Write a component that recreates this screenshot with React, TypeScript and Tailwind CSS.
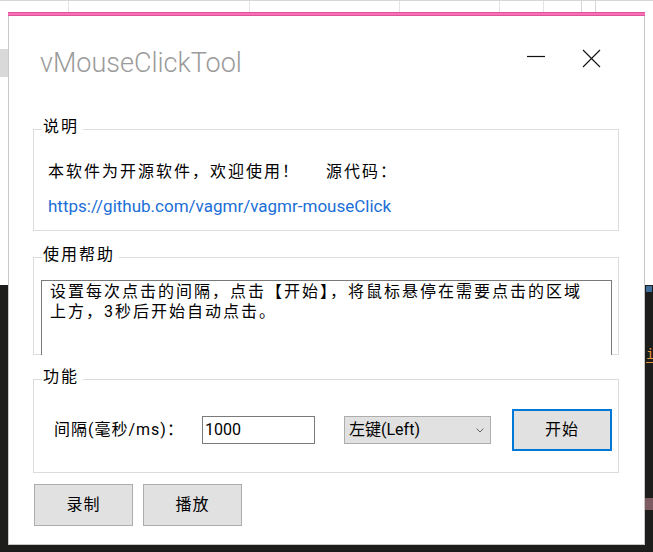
import React from "react";

function GroupBox({
  label,
  className,
  children,
}: {
  label: string;
  className: string;
  children?: React.ReactNode;
}) {
  return (
    <div className={"relative w-[586px] border border-[#dcdcdc] " + className}>
      <span className="absolute left-[8px] top-[-13px] bg-white pl-[1px] pr-[4px] text-[16px] leading-[20px] tracking-[2px] text-black">
        {label}
      </span>
      {children}
    </div>
  );
}

export default function App() {
  return (
    <div className="relative h-[552px] w-[653px] overflow-hidden bg-white font-['Roboto','Noto_Sans_CJK_SC',sans-serif]">
      {/* desktop behind the window */}
      <div className="absolute inset-x-0 top-0 flex h-[12px] border-t border-[#d6d6d6]">
        <div className="w-[69px] border-r border-[#e4e4e4]" />
        <div className="w-[181px] border-r border-[#e4e4e4]" />
        <div className="w-[150px] border-r border-[#e4e4e4]" />
        <div className="w-[100px] border-r border-[#e4e4e4]" />
        <div className="w-[44px] border-r border-[#e4e4e4]" />
        <div className="w-[38px] border-r border-[#d6d6d6]" />
        <div className="w-[14px] border-r border-[#d6d6d6] bg-white" />
      </div>
      <div className="absolute left-0 top-[49px] h-[28px] w-[8px] bg-[#d9d9d9]" />
      <div className="absolute inset-x-0 bottom-0 top-[285px] bg-[#1d1e1b]">
        <div className="absolute left-[646px] top-[1px] h-[6px] w-[6px] bg-[#3d6f9a]" />
        <div className="absolute left-[646px] top-[61px] border-b border-[#e5943a] text-[14px] leading-[16px] text-[#e5943a] font-['DejaVu_Sans_Mono',monospace]">
          i
        </div>
        <div className="absolute left-[645px] top-[213px] h-[12px] w-[8px] bg-[#7c5b63]" />
      </div>

      {/* window */}
      <div className="absolute left-[8px] top-[12px] flex h-[533px] w-[637px] flex-col">
        <div className="h-[4px] border-y border-[#d7579b] bg-[#ff6db6]" />
        <div className="flex flex-1 flex-col border-x border-b border-[#c8c8c8] bg-white px-[24px]">
          {/* title bar */}
          <div className="flex h-[113px] items-start">
            <div className="mt-[30px] flex-1 pl-[7px] text-[27px] font-light leading-[34px] text-[#9b9b9b] font-['Roboto',sans-serif]">
              vMouseClickTool
            </div>
            <svg width="20" height="20" viewBox="0 0 20 20" className="mt-[32px]">
              <line x1="1" y1="8.5" x2="19" y2="8.5" stroke="#111" strokeWidth="1.2" />
            </svg>
            <svg width="20" height="20" viewBox="0 0 20 20" className="ml-[36px] mr-[18px] mt-[33px]">
              <line x1="1" y1="1" x2="18" y2="18" stroke="#111" strokeWidth="1.1" />
              <line x1="18" y1="1" x2="1" y2="18" stroke="#111" strokeWidth="1.1" />
            </svg>
          </div>

          {/* 说明 */}
          <GroupBox label="说明" className="h-[102px] pl-[14px] pt-[32px]">
            <div className="flex h-[20px] items-center text-[16px] leading-[20px] tracking-[2px] text-black">
              <span>本软件为开源软件，欢迎使用！</span>
              <span className="inline-block w-[26px]" />
              <span>源代码：</span>
            </div>
            <div className="mt-[14px] text-[17px] leading-[20px] text-[#1b6ed6] font-['Roboto',sans-serif]">
              https://github.com/vagmr/vagmr-mouseClick
            </div>
          </GroupBox>

          {/* 使用帮助 */}
          <GroupBox label="使用帮助" className="mt-[26px] flex flex-col pl-[7px] pr-[6px] pt-[22px]">
            <div className="-mb-px h-[75px] border-x border-t border-[#7a7a7a] bg-white pl-[8px] pt-[1px] text-[16px] leading-[20px] tracking-[2px] text-black">
              <div>设置每次点击的间隔，点击【开始】，将鼠标悬停在需要点击的区域</div>
              <div>上方，3秒后开始自动点击。</div>
            </div>
          </GroupBox>

          {/* 功能 */}
          <GroupBox label="功能" className="mt-[24px] h-[94px] pt-[29px]">
            <div className="flex h-[42px] items-center">
              <div className="w-[168px] pl-[20px] text-[16px] leading-[20px] tracking-[1px] text-black">
                间隔(毫秒/ms)：
              </div>
              <div className="flex h-[28px] w-[113px] items-center border border-[#7a7a7a] bg-white pl-[2px] text-[16px] text-black">
                1000
              </div>
              <div className="ml-[29px] flex h-[28px] w-[147px] items-center justify-between border border-[#adadad] bg-[#e1e1e1] pl-[4px] pr-[6px] text-[16px] text-black">
                <span>左键(Left)</span>
                <svg width="8" height="5" viewBox="0 0 8 5">
                  <polyline points="0.5,0.5 4,4 7.5,0.5" fill="none" stroke="#666" strokeWidth="1" />
                </svg>
              </div>
              <button className="ml-[21px] flex h-[42px] w-[100px] items-center justify-center border-2 border-[#0078d7] bg-[#e1e1e1] text-[16px] tracking-[1px] text-black">
                开始
              </button>
            </div>
          </GroupBox>

          {/* buttons */}
          <div className="mt-[11px] flex gap-[10px] pl-[1px]">
            <button className="flex h-[42px] w-[99px] items-center justify-center border border-[#adadad] bg-[#e1e1e1] text-[16px] tracking-[1px] text-black">
              录制
            </button>
            <button className="flex h-[42px] w-[99px] items-center justify-center border border-[#adadad] bg-[#e1e1e1] text-[16px] tracking-[1px] text-black">
              播放
            </button>
          </div>
        </div>
      </div>
    </div>
  );
}
